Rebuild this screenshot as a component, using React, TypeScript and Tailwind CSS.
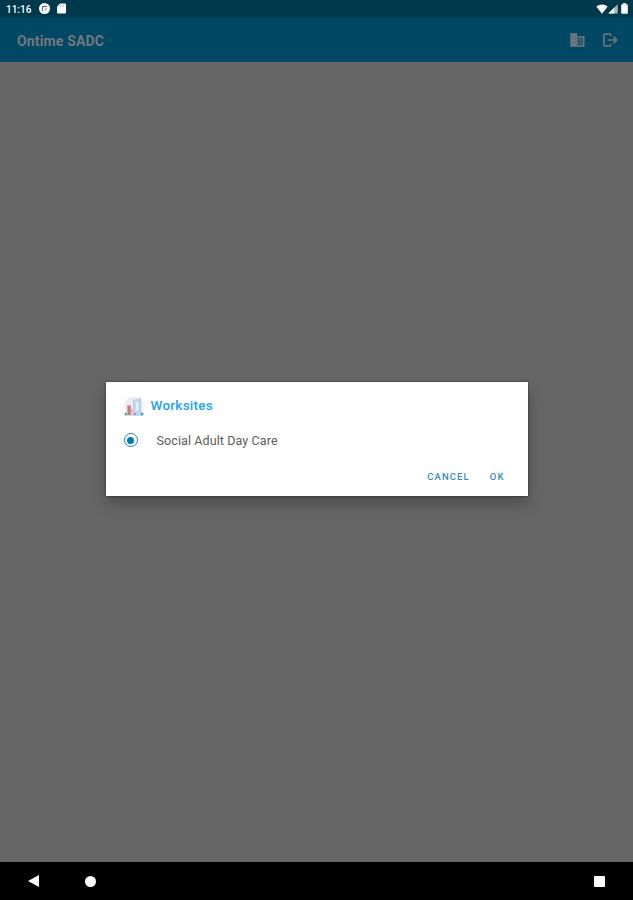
import { useState } from 'react';

const worksites = ['Social Adult Day Care'];

function StatusBar() {
    return (
        <div className="flex h-[17px] shrink-0 items-center justify-between bg-[#00384c] pl-[6px] pr-[5px] text-white">
            <div className="flex items-center">
                <span className="w-[33px] pt-px text-[10px] leading-[17px] font-medium">11:16</span>
                {/* Notification */}
                <svg className="h-[11px] w-[11px]" viewBox="0 0 11 11">
                    <circle cx="5.5" cy="5.5" r="5.5" fill="#fff" />
                    <path d="M3.6 8V3.6h4.6" fill="none" stroke="#00384c" strokeWidth="1" opacity=".8" />
                    <path d="M5.8 5.4h2.6L6.8 7.4h-1z" fill="#00384c" opacity=".45" />
                </svg>
                {/* SD card */}
                <svg className="ml-[7px] h-[11px] w-[9px]" viewBox="0 0 9 11">
                    <path d="M3 .5h5a1 1 0 0 1 1 1v8a1 1 0 0 1-1 1H1a1 1 0 0 1-1-1v-6z" fill="#fff" />
                    <path d="M3.3 2v1.6M5 2v1.6M6.7 2v1.6" stroke="#00384c" strokeWidth=".5" opacity=".6" />
                </svg>
            </div>
            <div className="flex items-center">
                <svg className="h-[10px] w-[12px]" viewBox="0 0 12 10">
                    <path d="M.3 2.5C3.6-.3 8.4-.3 11.7 2.5L6 9.8z" fill="#fff" />
                </svg>
                <svg className="h-[10px] w-[10px]" viewBox="0 0 10 10">
                    <path d="M.3 9.6 9.7.3v9.3z" fill="#fff" opacity=".65" />
                    <path d="M.3 9.6 6.2 3.7v5.9z" fill="#fff" />
                </svg>
                <svg className="ml-[3px] h-[11px] w-[7px]" viewBox="0 0 7 11">
                    <path d="M2.2 0h2.6v1.2H6a.8.8 0 0 1 .8.8v8a.8.8 0 0 1-.8.8H1a.8.8 0 0 1-.8-.8V2a.8.8 0 0 1 .8-.8h1.2z" fill="#fff" />
                </svg>
            </div>
        </div>
    );
}

function AppBar() {
    return (
        <header className="flex h-[45px] shrink-0 items-center justify-between bg-[#004863] pl-[17px] pr-[14px] text-[#72797e]">
            <h1 className="pt-[2px] text-[14px] leading-5 font-bold tracking-[0.15px]">Ontime SADC</h1>
            <div className="flex items-center gap-[15px]">
                <svg className="h-[18px] w-[18px]" viewBox="0 0 24 24" fill="currentColor">
                    <path d="M3 3h9v4h10v14H3z" />
                    <path d="M12 9h8v10h-8v-2h2v-2h-2v-2h2v-2h-2z" fill="#004863" opacity=".75" />
                    <path d="M16 11h2v2h-2zM16 15h2v2h-2z" />
                    <path d="M5 6h2v1.5H5zM8.5 6h2v1.5h-2zM5 10h2v1.5H5zM8.5 10h2v1.5h-2zM5 14h2v1.5H5zM8.5 14h2v1.5h-2z" fill="#004863" opacity=".3" />
                </svg>
                <svg className="h-[18px] w-[18px]" viewBox="0 0 24 24" fill="none" stroke="currentColor" strokeWidth="2">
                    <path d="M13 7V5a1 1 0 0 0-1-1H5a1 1 0 0 0-1 1v14a1 1 0 0 0 1 1h7a1 1 0 0 0 1-1v-2M9 12h11M16.5 7.5l4.5 4.5-4.5 4.5" />
                </svg>
            </div>
        </header>
    );
}

function BuildingIcon() {
    return (
        <svg className="h-[20px] w-[20px]" viewBox="0 0 20 20">
            <circle cx="10" cy="10" r="9.5" fill="#eceaf3" />
            <path d="M9.5 4 16.5 1.5V19h-7z" fill="#c3d8f0" />
            <path d="M12 6h2.4v9H12z" fill="#e4effa" />
            <path d="M9.5 4v10.5M16.5 2v17" stroke="#a3c3e6" strokeWidth=".8" />
            <path d="M3.4 9.5h3.4V19H3.4z" fill="#c47a7c" />
            <path d="M6.8 12.5h3V19h-3z" fill="#e5c3c0" />
            <path d="M1 19.3h18" stroke="#bfd3e5" strokeWidth="1" />
            <circle cx="1.8" cy="18" r="1.4" fill="#6eaaa5" />
            <circle cx="18.2" cy="18" r="1.4" fill="#5a9bd0" />
            <path d="M10.2 17h2v2h-2z" fill="#6c9dce" />
        </svg>
    );
}

function WorksiteDialog() {
    const [selected, setSelected] = useState(worksites[0]);

    return (
        <div role="dialog" className="flex h-[114px] w-[422px] flex-col bg-white shadow-[0_8px_14px_rgba(0,0,0,0.25),0_0_2px_rgba(0,0,0,0.6)]">
            <div className="flex items-center gap-[7px] pt-[14px] pl-[18px]">
                <BuildingIcon />
                <h2 className="-mt-[2px] text-[13.5px] leading-5 font-medium tracking-[0.25px] text-[#1ca2f2]">Worksites</h2>
            </div>
            {worksites.map((name) => (
                <button
                    key={name}
                    className="mt-[14px] flex h-[20px] items-center pl-[18px] text-[12.5px] tracking-[0.1px] text-[#5c5c5c]"
                    onClick={() => setSelected(name)}
                >
                    <span className="mr-[19px] flex h-[14px] w-[14px] items-center justify-center rounded-full border border-[#2580b7]">
                        {selected === name && <span className="h-[7px] w-[7px] rounded-full bg-[#0877b5]" />}
                    </span>
                    <span className="pt-[2px]">{name}</span>
                </button>
            ))}
            <div className="mt-[17px] flex justify-end gap-[20px] pr-[23px] text-[9.5px] leading-5 font-medium tracking-[1.1px] text-[#388bbd]">
                <button>CANCEL</button>
                <button>OK</button>
            </div>
        </div>
    );
}

function NavigationBar() {
    return (
        <nav className="flex h-[38px] shrink-0 items-center bg-black pr-[28px] pl-[28px]">
            <svg className="h-[12px] w-[12px]" viewBox="0 0 12 12">
                <path d="M0 6 11 0v12z" fill="#fff" />
            </svg>
            <span className="ml-[45px] h-[11px] w-[11px] rounded-full bg-white" />
            <span className="ml-auto h-[11px] w-[11px] rounded-[1px] bg-white" />
        </nav>
    );
}

export default function App() {
    return (
        <div className="flex h-[900px] w-[633px] flex-col overflow-hidden bg-[#666] font-[Roboto,sans-serif]">
            <StatusBar />
            <AppBar />
            <main className="flex flex-1 items-start justify-center pt-[320px]">
                <WorksiteDialog />
            </main>
            <NavigationBar />
        </div>
    );
}
